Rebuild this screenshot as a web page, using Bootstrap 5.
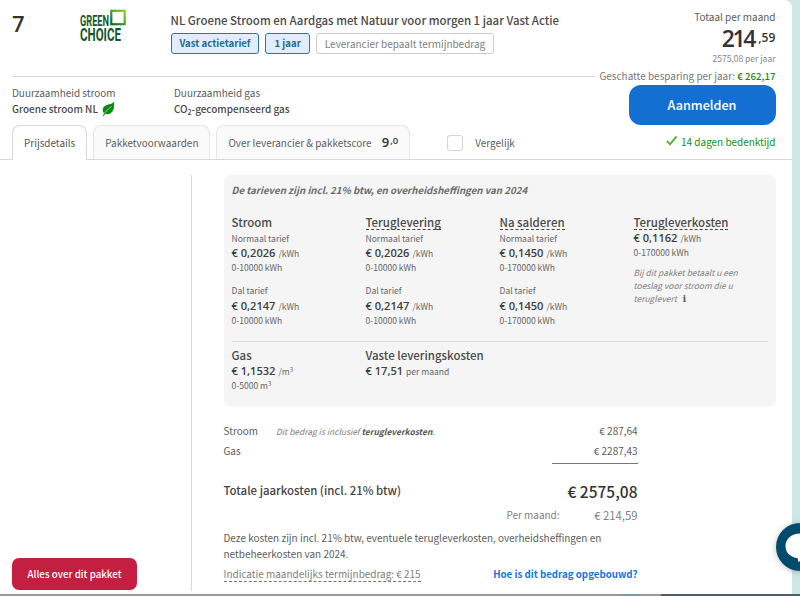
<!DOCTYPE html>
<html lang="nl">
<head>
<meta charset="utf-8">
<title>Greenchoice</title>
<link href="https://cdn.jsdelivr.net/npm/bootstrap@5.3.0/dist/css/bootstrap.min.css" rel="stylesheet">
<style>
body{width:800px;height:596px;overflow:hidden;background:#d0e7e8;color:#5c5c5c;font:9.96px/16px "Noto Sans CJK SC","Noto Sans",sans-serif;white-space:nowrap}
.offer{width:792px;height:594px;border-radius:0 8px 0 0}
.offer-head{height:160px;border-bottom:1px solid #d8d8d8}
.head-left{width:595px;padding-left:12px}
.head-right{width:180.500px}
.head-top{height:77px;border-bottom:1px solid #d8d8d8}
.rank{font:600 22px/24px "Open Sans",sans-serif;color:#333;width:68px;padding-top:11px}
.logo-box{width:90.500px;padding-top:8px}
.offer-title{font-size:11.45px;font-weight:500;color:#4a4a4a;line-height:17px;padding-top:12px}
.tags{gap:6px;padding-top:4px}
.tag{height:21px;line-height:19px;border:1px solid #ccc;border-radius:3px;padding:0 8px;color:#808080}
.tag-blue{border-color:#2a7898;background:#e1edfb;color:#216b90;font-weight:700;font-size:9.63px}
.strong5{font-weight:500;color:#4a4a4a;line-height:15px}
.sustain{height:48px;padding-top:8px}
.tabs{height:35px;gap:6px;border:0;flex-wrap:nowrap;font-size:9.96px}
.tabs .nav-link{height:34px;border:1px solid #e6e6e6;border-bottom:0;border-radius:8px 8px 0 0;background:#fafafa;color:#5c5c5c;padding:0 11px;line-height:34px;margin:0}
.tabs .nav-link.active{height:35px;background:#fff;color:#555;border-color:#d8d8d8}
.score{font:600 13px/0 "Open Sans",sans-serif;color:#333;margin-left:8px}
.score small{font-size:9.5px;vertical-align:3px;margin-left:1px}
.total small,.score small{font-weight:600}
.cmp{width:16px;height:16px;border:1px solid #d4d4d4;border-radius:3px}
.total{font:600 23px/24px "Open Sans",sans-serif;color:#333;letter-spacing:-2.300px;height:25px;padding-top:1px}
.total small{font-size:12px;letter-spacing:.1px;vertical-align:5px;line-height:0;margin-left:4px}
.green{color:#109018}
.btn-join{width:147px;height:40px;border-radius:12px;background:#146fd2;color:#fff;font-size:12.6px;font-weight:500;line-height:40px;padding:0;border:0}
.side{width:192px;border-right:1px solid #d8d8d8;height:416px;margin-top:15px;padding:0 0 1px 12px}
.btn-all{width:125px;height:32px;border-radius:7px;background:#c41e40;color:#fff;font-size:9.75px;font-weight:500;line-height:31px;padding:0;border:0}
.detail{width:552px;margin:15px 0 0 31.500px}
.panel{height:232px;border-radius:7px;background:#f5f5f5;padding:7px 8px 0;font-size:8.55px;line-height:14px;color:#666}
.panel-note{font-size:9.7px;line-height:16px;font-weight:700;font-style:italic;color:#6c6c6c;height:32px}
.rates{height:127px}
.rate{width:134px}
.rate h3{font-size:11.48px;line-height:17px;font-weight:500;color:#4a4a4a;margin:0}
.dash{display:inline-block;height:16px;border-bottom:1px dashed #444}
.price{line-height:16px}
.price b{font:600 11.1px/0 "Open Sans",sans-serif;color:#404040;margin-right:1px}
.unit-row{height:22px;line-height:13px}
.dal{padding-top:1px}
.panel sup{font-size:6px;line-height:0;top:-.5em}
.rule{height:1px;background:#dcdcdc}
.ital{font-style:italic;font-size:8.42px;line-height:12.8px;color:#808080}
.sums{width:414px}
.sumline{width:86px;border-bottom:1px solid #777}
.launcher{position:absolute;left:776px;top:523px;width:48px;height:48px;border-radius:50%;background:#004b6b;box-shadow:0 1px 6px rgba(0,0,0,.25)}
.footline{height:2px;background:#999}
</style>
<script src="https://cdn.jsdelivr.net/npm/bootstrap@5.3.0/dist/js/bootstrap.bundle.min.js"></script>
</head>
<body>
<main class="offer bg-white">
  <header class="offer-head d-flex">
    <div class="head-left">
      <div class="head-top d-flex">
        <div class="rank">7</div>
        <div class="logo-box">
          <svg width="48" height="40" viewBox="0 0 48 40" font-family="Roboto, sans-serif" font-weight="700" fill="#14572f">
            <defs><linearGradient id="lg" x1="0" y1="1" x2="1" y2="0"><stop offset="0" stop-color="#14602f"/><stop offset=".5" stop-color="#4a9e30"/><stop offset="1" stop-color="#8bd02c"/></linearGradient></defs>
            <text x="0" y="17.800" font-size="15" textLength="29" lengthAdjust="spacingAndGlyphs">GREEN</text>
            <text x="0" y="33" font-size="18" textLength="41" lengthAdjust="spacingAndGlyphs">CHOICE</text>
            <rect x="31.3" y="2.8" width="13.4" height="13.4" fill="#fff" stroke="url(#lg)" stroke-width="2.2"/>
          </svg>
        </div>
        <div>
          <div class="offer-title">NL Groene Stroom en Aardgas met Natuur voor morgen 1 jaar Vast Actie</div>
          <div class="tags d-flex">
            <span class="tag tag-blue">Vast actietarief</span><span class="tag tag-blue">1 jaar</span><span class="tag">Leverancier bepaalt termijnbedrag</span>
          </div>
        </div>
      </div>
      <div class="sustain d-flex">
        <div style="width:162px"><div>Duurzaamheid stroom</div>
          <div class="strong5 d-flex">Groene stroom NL
            <svg class="ms-1" width="13" height="16" viewBox="0 0 13 16"><path d="M12 0.5C12.8 6 11.5 12.5 5.5 13.2 4.2 13.3 3.4 13 3 12.8L1.8 15.4 1 15 2 12.2C-.3 9.500 .5 6 4 4.300 7 3 10 3.500 12 .5Z" fill="#0b8a13"/><path d="M2.400 12.300C4.500 9.500 7 7.500 9.500 5.500" stroke="#fff" stroke-width=".6" fill="none"/></svg>
          </div></div>
        <div><div>Duurzaamheid gas</div><div class="strong5">CO<sub style="font-size:7px;line-height:0">2</sub>-gecompenseerd gas</div></div>
      </div>
      <div class="d-flex">
        <nav class="nav nav-tabs tabs">
          <a class="nav-link active" href="#">Prijsdetails</a>
          <a class="nav-link" href="#">Pakketvoorwaarden</a>
          <a class="nav-link" href="#">Over leverancier &amp; pakketscore <span class="score">9<small>,0</small></span></a>
        </nav>
        <div class="d-flex align-items-center" style="margin-left:37px"><span class="cmp"></span><span style="margin-left:12px">Vergelijk</span></div>
      </div>
    </div>
    <div class="head-right d-flex flex-column align-items-end">
      <div style="padding-top:9px">Totaal per maand</div>
      <div class="total">214<small>,59</small></div>
      <div style="font-size:8.5px;color:#888">2575,08 per jaar</div>
      <div style="color:#777;padding-top:2px;height:19px">Geschatte besparing per jaar: <span class="green" style="font-weight:500;font-size:9.7px">€ 262,17</span></div>
      <button class="btn btn-join">Aanmelden</button>
      <div class="green d-flex align-items-center" style="padding-top:9px">
        <svg width="12" height="11" viewBox="0 0 12 11" style="margin:-4px 3px 0 0"><path d="M1 6 4 9.300 10.500 1.500" fill="none" stroke="#5cb531" stroke-width="2"/></svg>14 dagen bedenktijd</div>
    </div>
  </header>
  <div class="d-flex">
    <aside class="side d-flex align-items-end"><button class="btn btn-all">Alles over dit pakket</button></aside>
    <section class="detail">
      <div class="panel">
        <div class="panel-note">De tarieven zijn incl. 21% btw, en overheidsheffingen van 2024</div>
        <div class="rates d-flex">
          <div class="rate"><h3>Stroom</h3><div>Normaal tarief</div><div class="price"><b>€ 0,2026</b> /kWh</div><div class="unit-row">0-10000 kWh</div><div>Dal tarief</div><div class="price dal"><b>€ 0,2147</b> /kWh</div><div class="unit-row">0-10000 kWh</div></div>
          <div class="rate"><h3><span class="dash">Teruglevering</span></h3><div>Normaal tarief</div><div class="price"><b>€ 0,2026</b> /kWh</div><div class="unit-row">0-10000 kWh</div><div>Dal tarief</div><div class="price dal"><b>€ 0,2147</b> /kWh</div><div class="unit-row">0-10000 kWh</div></div>
          <div class="rate"><h3><span class="dash">Na salderen</span></h3><div>Normaal tarief</div><div class="price"><b>€ 0,1450</b> /kWh</div><div class="unit-row">0-170000 kWh</div><div>Dal tarief</div><div class="price dal"><b>€ 0,1450</b> /kWh</div><div class="unit-row">0-170000 kWh</div></div>
          <div class="rate"><h3><span class="dash">Terugleverkosten</span></h3><div class="price" style="line-height:15px"><b>€ 0,1162</b> /kWh</div><div style="height:20px;line-height:13px">0-170000 kWh</div>
            <div class="ital">Bij dit pakket betaalt u een<br>toeslag voor stroom die u<br>teruglevert &nbsp;<b style="font:700 10px/0 'DejaVu Serif',serif;margin-left:2px;color:#666">i</b></div></div>
        </div>
        <div class="rule"></div>
        <div class="d-flex" style="padding-top:5px">
          <div class="rate"><h3>Gas</h3><div class="price" style="line-height:14px"><b>€ 1,1532</b> /m<sup>3</sup></div><div>0-5000 m<sup>3</sup></div></div>
          <div class="rate"><h3>Vaste leveringskosten</h3><div class="price" style="line-height:14px"><b>€ 17,51</b> per maand</div></div>
        </div>
      </div>
      <div class="sums">
        <div class="d-flex" style="padding-top:16px;height:35px"><span style="width:52.500px">Stroom</span><span class="ital" style="line-height:16px">Dit bedrag is inclusief <b style="color:#555">terugleverkosten</b>.</span><span class="ms-auto">€ 287,64</span></div>
        <div class="d-flex justify-content-between" style="height:21px;padding-top:1px"><span>Gas</span><span>€ 2287,43</span></div>
        <div class="sumline ms-auto"></div>
        <div class="d-flex justify-content-between" style="padding-top:15px;line-height:22px;height:43px;color:#333"><span style="font-size:11.45px;font-weight:500;color:#444">Totale jaarkosten (incl. 21% btw)</span><span style="font-size:15.500px;font-weight:500;line-height:24px">€ 2575,08</span></div>
        <div class="d-flex justify-content-end" style="color:#808080;height:23px"><span>Per maand:</span><span class="text-end" style="width:78px;font-size:11.300px">€ 214,59</span></div>
        <div style="height:37px">Deze kosten zijn incl. 21% btw, eventuele terugleverkosten, overheidsheffingen en<br>netbeheerkosten van 2024.</div>
        <div class="d-flex justify-content-between"><span class="dash" style="color:#808080;border-color:#777;height:15px;line-height:14px">Indicatie maandelijks termijnbedrag: € 215</span><span style="font-size:9.730px;font-weight:700;color:#1676d8;line-height:14px">Hoe is dit bedrag opgebouwd?</span></div>
      </div>
    </section>
  </div>
</main>
<div class="footline d-flex"><span style="width:622px"></span><span style="width:18px;background:#6d9fb0"></span><span style="width:21px"></span><span class="flex-fill" style="background:#44627c"></span></div>
<div class="launcher"><svg width="24" height="48" viewBox="0 0 24 48"><path d="M24 10.500C15 10.500 9.500 16.500 9.500 23S14 34 22 35.500V39L24 38Z" fill="#fff"/></svg></div>
</body>
</html>
